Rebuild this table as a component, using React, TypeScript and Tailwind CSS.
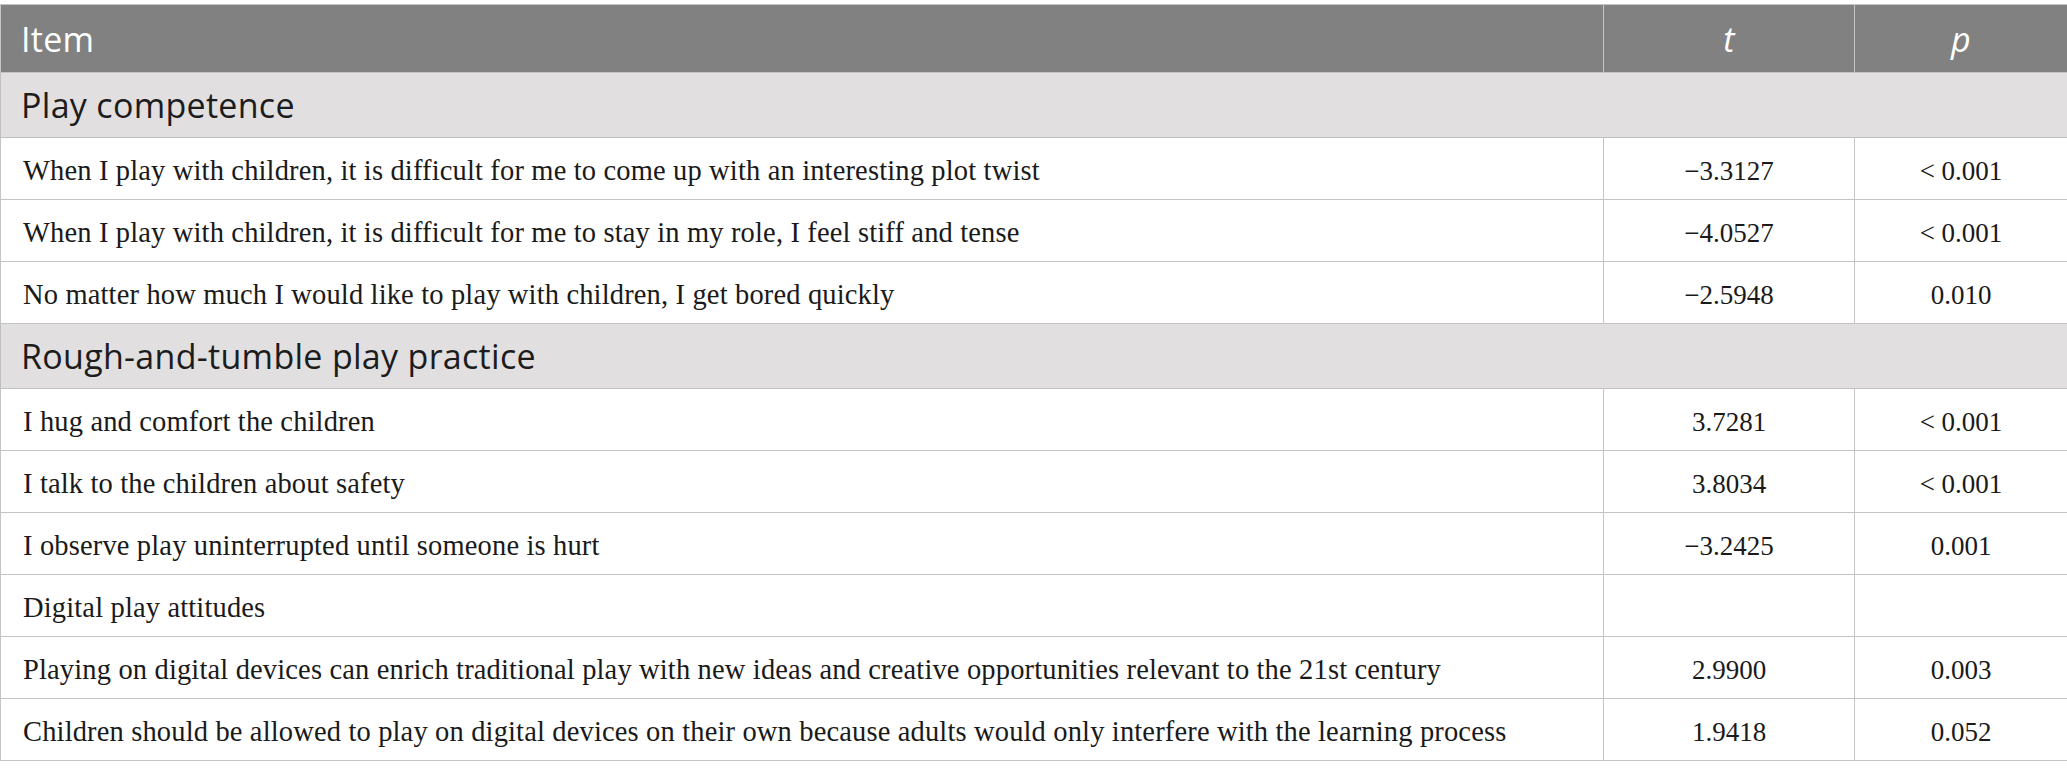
type Row =
  | { kind: "section"; label: string }
  | { kind: "item"; label: string; t: string; p: string };

const rows: Row[] = [
  { kind: "section", label: "Play competence" },
  {
    kind: "item",
    label: "When I play with children, it is difficult for me to come up with an interesting plot twist",
    t: "\u22123.3127",
    p: "< 0.001",
  },
  {
    kind: "item",
    label: "When I play with children, it is difficult for me to stay in my role, I feel stiff and tense",
    t: "\u22124.0527",
    p: "< 0.001",
  },
  {
    kind: "item",
    label: "No matter how much I would like to play with children, I get bored quickly",
    t: "\u22122.5948",
    p: "0.010",
  },
  { kind: "section", label: "Rough-and-tumble play practice" },
  { kind: "item", label: "I hug and comfort the children", t: "3.7281", p: "< 0.001" },
  { kind: "item", label: "I talk to the children about safety", t: "3.8034", p: "< 0.001" },
  {
    kind: "item",
    label: "I observe play uninterrupted until someone is hurt",
    t: "\u22123.2425",
    p: "0.001",
  },
  { kind: "item", label: "Digital play attitudes", t: "", p: "" },
  {
    kind: "item",
    label:
      "Playing on digital devices can enrich traditional play with new ideas and creative opportunities relevant to the 21st century",
    t: "2.9900",
    p: "0.003",
  },
  {
    kind: "item",
    label:
      "Children should be allowed to play on digital devices on their own because adults would only interfere with the learning process",
    t: "1.9418",
    p: "0.052",
  },
];

const sans = "font-['Open_Sans',sans-serif]";
const serif = "font-['Liberation_Serif',serif]";

export default function App() {
  return (
    <div className="w-[2067px] h-[777px] bg-white pt-[4px]">
      <table className="w-[2067px] border-collapse table-fixed">
        <colgroup>
          <col className="w-[1603px]" />
          <col className="w-[251px]" />
          <col className="w-[213px]" />
        </colgroup>
        <thead>
          <tr className={`h-[68px] bg-[#808180] text-white text-[34px] tracking-[0.3px] ${sans}`}>
            <th className="border border-[#c4c4c4] text-left font-normal pl-[20px] pt-[2px]">Item</th>
            <th className="border border-[#c4c4c4] border-l-[#a8a8a8] font-normal italic pt-[2px]">t</th>
            <th className="border border-[#c4c4c4] border-l-[#a8a8a8] font-normal italic pt-[2px]">p</th>
          </tr>
        </thead>
        <tbody>
          {rows.map((r, i) =>
            r.kind === "section" ? (
              <tr
                key={i}
                className={`h-[65px] bg-[#e1dfe0] text-[#1c1c1c] text-[34px] tracking-[0.3px] ${sans}`}
              >
                <td colSpan={3} className="border border-[#c0c0c0] pl-[20px]">
                  {r.label}
                </td>
              </tr>
            ) : (
              <tr key={i} className={`h-[62px] text-[#1a1a1a] ${serif}`}>
                <td className="border border-[#c4c4c4] pl-[22px] pt-[5px] text-[28.5px] tracking-[0.15px]">
                  {r.label}
                </td>
                <td className="border border-[#c4c4c4] text-center pt-[5px] text-[27px]">{r.t}</td>
                <td className="border border-[#c4c4c4] text-center pt-[5px] text-[27px]">{r.p}</td>
              </tr>
            )
          )}
        </tbody>
      </table>
    </div>
  );
}
